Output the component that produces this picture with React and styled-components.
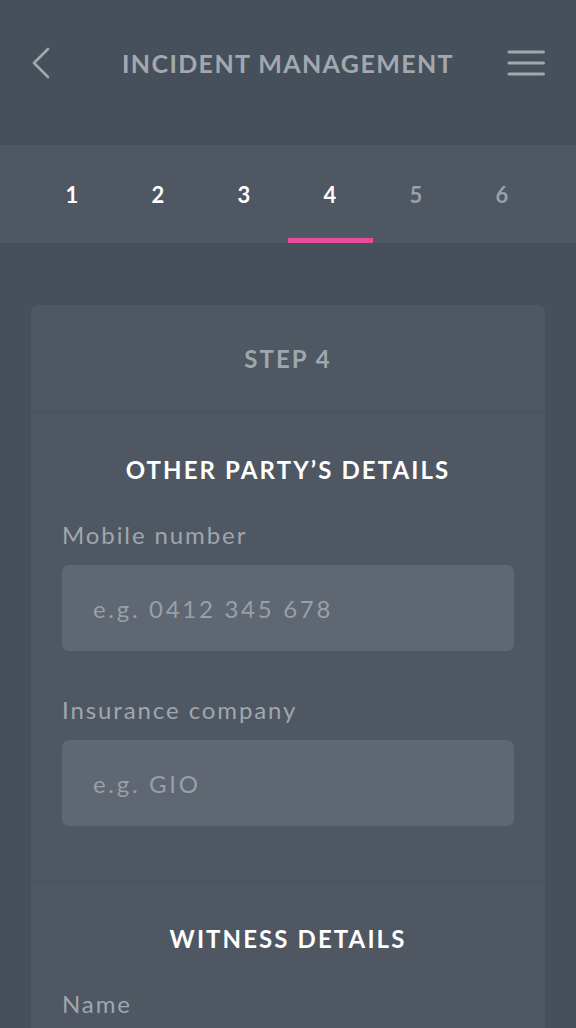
import styled, { createGlobalStyle } from 'styled-components';

const GlobalStyle = createGlobalStyle`
  html, body {
    margin: 0;
    padding: 0;
    background: #46505b;
  }
  body {
    font-family: Lato, "Open Sans", sans-serif;
  }
`

const Page = styled.div`
  width: 576px;
  min-height: 1028px;
  background: #46505b;
  overflow: hidden;
`
const TopBar = styled.header`
  height: 145px;
  padding: 0 31px 19px 31px;
  box-sizing: border-box;
  display: flex;
  align-items: center;
  justify-content: space-between;
`
const IconButton = styled.button`
  width: 38px;
  height: 38px;
  padding: 0;
  border: 0;
  background: none;
  display: flex;
  align-items: center;
  justify-content: ${p => p.$align || 'center'};
`
const Title = styled.h1`
  margin: 0;
  font-size: 25px;
  font-weight: 700;
  letter-spacing: 1.4px;
  color: #a3a8af;
`
const Steps = styled.nav`
  height: 98px;
  background: #4e5762;
  padding: 0 31px 0 29px;
  display: grid;
  grid-template-columns: repeat(6, 1fr);
`
const StepTab = styled.div`
  position: relative;
  display: flex;
  align-items: center;
  justify-content: center;
  font-size: 22px;
  font-weight: 700;
  color: ${p => (p.$done ? '#ffffff' : '#99a0a8')};
  &::after {
    content: '';
    display: ${p => (p.$active ? 'block' : 'none')};
    position: absolute;
    left: 1px;
    right: 0;
    bottom: 0;
    height: 5px;
    background: #ea4c9c;
  }
`
const Content = styled.main`
  padding: 62px 31px 0 31px;
`
const Card = styled.section`
  background: #4e5762;
  border-radius: 7px 7px 0 0;
`
const CardHeader = styled.div`
  height: 107px;
  display: flex;
  align-items: center;
  justify-content: center;
  border-bottom: 1px solid #47505b;
  font-size: 24px;
  font-weight: 700;
  letter-spacing: 2px;
  color: #a0a6ad;
`
const Section = styled.div`
  padding: 42px 31px 55px 31px;
  border-bottom: ${p => (p.$last ? 'none' : '1px solid #47505b')};
`
const SectionTitle = styled.h2`
  margin: 0 0 36px 0;
  text-align: center;
  font-size: 24px;
  font-weight: 700;
  letter-spacing: 2.1px;
  color: #ffffff;
`
const Field = styled.div`
  display: flex;
  flex-direction: column;
  gap: 16px;
  & + & {
    margin-top: 44px;
  }
`
const Label = styled.label`
  font-size: 24px;
  letter-spacing: 1.9px;
  color: #a0a6ad;
`
const Input = styled.input`
  height: 86px;
  box-sizing: border-box;
  border: 0;
  border-radius: 7px;
  background: #5f6772;
  padding: 0 31px;
  font-family: Lato, "Open Sans", sans-serif;
  font-size: 24px;
  letter-spacing: 2.7px;
  color: #ffffff;
  outline: none;
  &::placeholder {
    color: #999fa7;
  }
`

const ChevronLeft = () => (
  <svg width="20" height="32" viewBox="0 0 20 32" fill="none">
    <path d="M17 2 L3 16 L17 30" stroke="#a3a8af" strokeWidth="2.6" strokeLinecap="round" strokeLinejoin="round" />
  </svg>
)

const Hamburger = () => (
  <svg width="38" height="26" viewBox="0 0 38 26" fill="none">
    <g stroke="#a3a8af" strokeWidth="3" strokeLinecap="round">
      <line x1="2" y1="2" x2="36.5" y2="2" />
      <line x1="2" y1="13" x2="36.5" y2="13" />
      <line x1="2" y1="24" x2="36.5" y2="24" />
    </g>
  </svg>
)

const steps = [1, 2, 3, 4, 5, 6]
const current = 4

const App = () => {
  return (
    <Page>
      <GlobalStyle />
      <TopBar>
        <IconButton $align={'flex-start'}><ChevronLeft /></IconButton>
        <Title>INCIDENT MANAGEMENT</Title>
        <IconButton $align={'flex-end'}><Hamburger /></IconButton>
      </TopBar>
      <Steps>
        {steps.map(n => (
          <StepTab key={n} $done={n <= current} $active={n === current}>{n}</StepTab>
        ))}
      </Steps>
      <Content>
        <Card>
          <CardHeader>STEP 4</CardHeader>
          <Section>
            <SectionTitle>OTHER PARTY’S DETAILS</SectionTitle>
            <Field>
              <Label>Mobile number</Label>
              <Input placeholder={'e.g. 0412 345 678'} />
            </Field>
            <Field>
              <Label>Insurance company</Label>
              <Input placeholder={'e.g. GIO'} />
            </Field>
          </Section>
          <Section $last>
            <SectionTitle>WITNESS DETAILS</SectionTitle>
            <Field>
              <Label>Name</Label>
              <Input placeholder={'e.g. John Smith'} />
            </Field>
          </Section>
        </Card>
      </Content>
    </Page>
  );
}

export default App
